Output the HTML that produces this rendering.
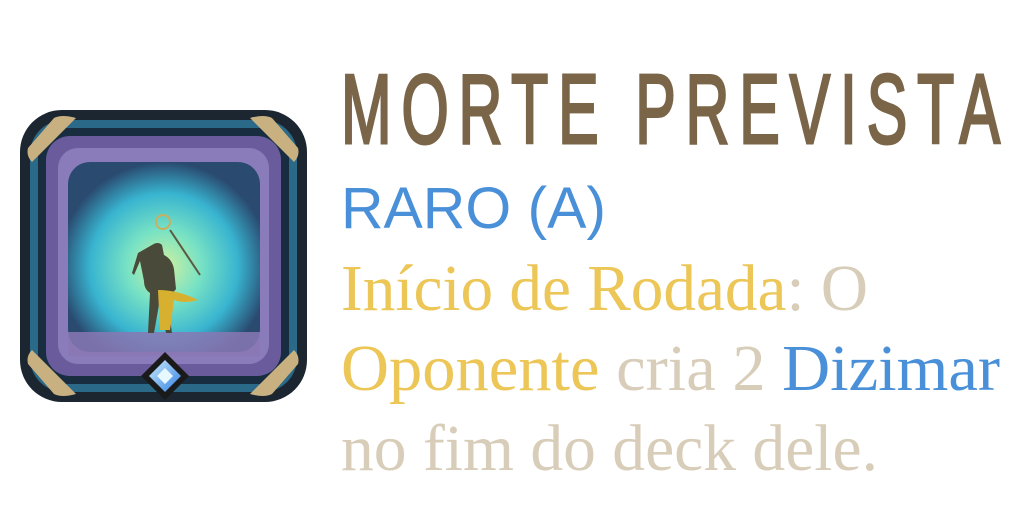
<!DOCTYPE html>
<html><head><meta charset="utf-8"><style>
html,body{margin:0;padding:0;background:#fff;width:1024px;height:512px;overflow:hidden}
svg{display:block}
</style></head><body>
<svg width="1024" height="512" viewBox="0 0 1024 512" xmlns="http://www.w3.org/2000/svg">
<defs>
<radialGradient id="portal" cx="0.5" cy="0.55" r="0.55">
<stop offset="0" stop-color="#d0f0a0"/><stop offset="0.35" stop-color="#78e2c4"/><stop offset="0.7" stop-color="#38b4d0"/><stop offset="1" stop-color="#2a4a70"/>
</radialGradient>
<linearGradient id="gem" x1="0" y1="0" x2="1" y2="1"><stop offset="0" stop-color="#cfeeff"/><stop offset="1" stop-color="#2f7fe0"/></linearGradient>
</defs>
<rect x="20" y="110" width="287" height="292" rx="42" fill="#1c2630"/>
<rect x="30" y="120" width="267" height="272" rx="34" fill="#2a6a88"/>
<rect x="38" y="128" width="251" height="256" rx="28" fill="#182e40"/>
<rect x="46" y="136" width="235" height="240" rx="24" fill="#6a5c9c"/>
<rect x="58" y="148" width="211" height="216" rx="20" fill="#8a7cba"/>
<rect x="68" y="162" width="192" height="190" rx="22" fill="url(#portal)"/>
<rect x="68" y="332" width="192" height="24" fill="#8a78b4" opacity="0.85"/>
<path d="M152 245 q6-4 10 0 l2 10 q8 4 10 14 l2 20 q-4 6-10 4 l6 40 h-6 l-6-34 -6 34 h-6 l2-40 q-6-4-6-12 l-4-20 -6 14 -2-2 6-20z" fill="#4a4a3a"/>
<path d="M158 290 q20 0 40 10 q-14 4-24 0 l-4 30 h-10z" fill="#d8b030"/>
<line x1="170" y1="230" x2="200" y2="275" stroke="#5a5a40" stroke-width="2"/>
<circle cx="163" cy="222" r="7" fill="none" stroke="#c8b060" stroke-width="2"/>
<path d="M250 118 q14-4 22 0 l26 30 q2 8-4 14 z" fill="#c8b080"/>
<path d="M76 118 q-14-4-22 0 l-26 30 q-2 8 4 14 z" fill="#c8b080"/>
<path d="M250 394 q14 4 22 0 l26-30 q2-8-4-14 z" fill="#c8b080"/>
<path d="M76 394 q-14 4-22 0 l-26-30 q-2-8 4-14 z" fill="#c8b080"/>
<path d="M165 352 l24 24 -24 24 -24-24z" fill="#1a1a1a"/>
<path d="M165 360 l16 16 -16 16 -16-16z" fill="url(#gem)"/>
<path d="M165 368 l8 8 -8 8 -8-8z" fill="#e8f8ff"/>
<g transform="translate(341,143) scale(0.62,1)">
<text x="0" y="0" font-family="Liberation Sans, sans-serif" font-size="98" fill="#7a6548" stroke="#7a6548" stroke-width="3" textLength="1063" lengthAdjust="spacing">MORTE PREVISTA</text>
</g>
<text x="341" y="228" font-family="Liberation Sans, sans-serif" font-size="58" fill="#4a90d9" textLength="265" lengthAdjust="spacingAndGlyphs">RARO (A)</text>
<text x="341" y="310" font-family="Liberation Serif, serif" font-size="66" textLength="527" lengthAdjust="spacingAndGlyphs"><tspan fill="#ecc657">Início de Rodada</tspan><tspan fill="#d8cdb9">: O</tspan></text>
<text x="341" y="390" font-family="Liberation Serif, serif" font-size="66" textLength="659" lengthAdjust="spacingAndGlyphs"><tspan fill="#ecc657">Oponente</tspan><tspan fill="#d8cdb9"> cria 2 </tspan><tspan fill="#4a90d9">Dizimar</tspan></text>
<text x="341" y="470" font-family="Liberation Serif, serif" font-size="66" fill="#d8cdb9" textLength="537" lengthAdjust="spacingAndGlyphs">no fim do deck dele.</text>
</svg>
</body></html>
